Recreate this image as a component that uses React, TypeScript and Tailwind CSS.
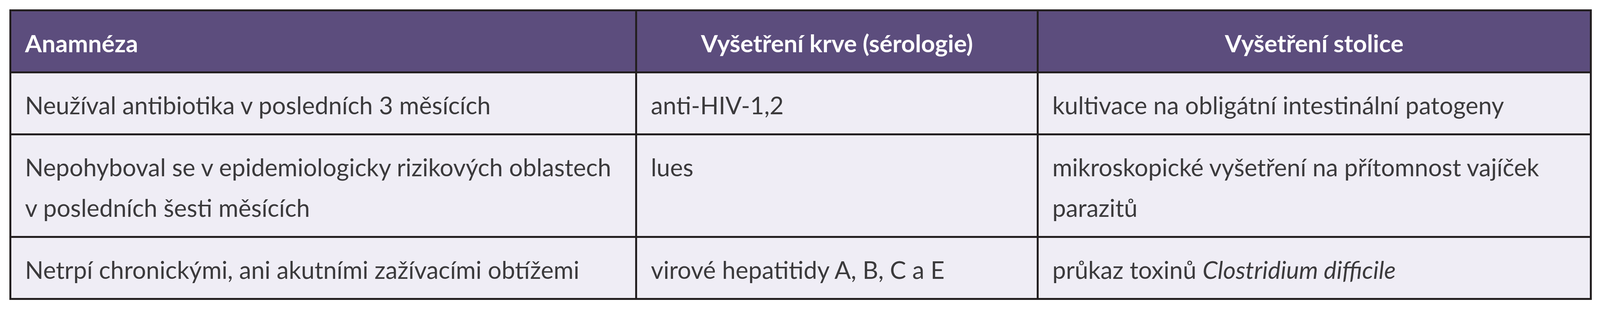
const headCell = "border-[5px] border-[#231f20] bg-[#5c4d7d] px-[35px] pt-[29px] pb-[21px] font-bold text-white";
const bodyCell = "border-[5px] border-[#231f20] bg-[#efedf5] px-[35px] pt-[29px] pb-[21px] align-top text-[#3b3a3c]";

export default function App() {
  return (
    <div className="h-[800px] w-full bg-white pl-[24px] pr-[21px] pt-[24px]">
      <table
        className="w-full table-fixed border-collapse text-[62px] leading-[104px] whitespace-nowrap"
        style={{ fontFamily: "Lato, 'Open Sans', sans-serif" }}
      >
        <colgroup>
          <col className="w-[39.6%]" />
          <col className="w-[25.4%]" />
          <col className="w-[35%]" />
        </colgroup>
        <thead>
          <tr>
            <th className={`${headCell} text-left`}>Anamnéza</th>
            <th className={`${headCell} text-center`}>Vyšetření krve (sérologie)</th>
            <th className={`${headCell} text-center`}>Vyšetření stolice</th>
          </tr>
        </thead>
        <tbody>
          <tr>
            <td className={bodyCell}>Neužíval antibiotika v posledních 3 měsících</td>
            <td className={bodyCell}>anti-HIV-1,2</td>
            <td className={bodyCell}>kultivace na obligátní intestinální patogeny</td>
          </tr>
          <tr>
            <td className={bodyCell}>
              Nepohyboval se v epidemiologicky rizikových oblastech
              <br />v posledních šesti měsících
            </td>
            <td className={bodyCell}>lues</td>
            <td className={bodyCell}>
              mikroskopické vyšetření na přítomnost vajíček
              <br />
              parazitů
            </td>
          </tr>
          <tr>
            <td className={bodyCell}>Netrpí chronickými, ani akutními zažívacími obtížemi</td>
            <td className={bodyCell}>virové hepatitidy A, B, C a E</td>
            <td className={bodyCell}>
              průkaz toxinů <i>Clostridium difficile</i>
            </td>
          </tr>
        </tbody>
      </table>
    </div>
  );
}
